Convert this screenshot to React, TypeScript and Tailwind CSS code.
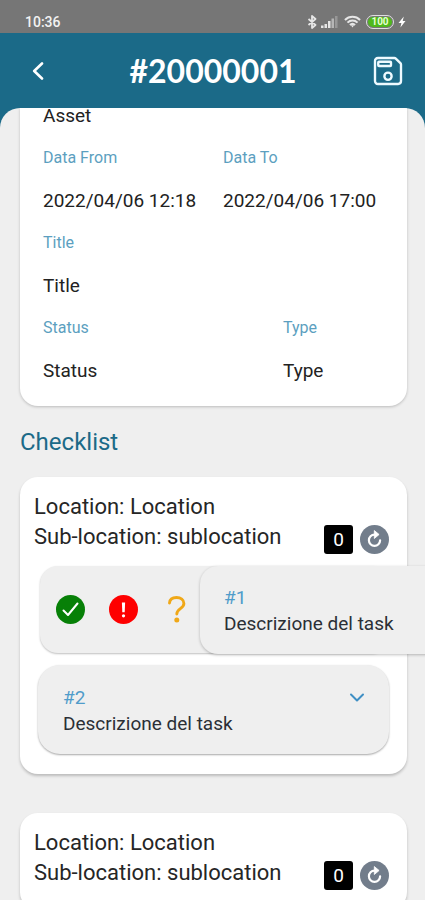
import type { ReactNode } from "react";

function BluetoothIcon() {
  return (
    <svg viewBox="0 0 10 14" className="h-[14px] w-[10px]" fill="none" stroke="#e6e6e6" strokeWidth="1.800" strokeLinejoin="round">
      <path d="M1.500 4 8.500 10 5 13V1l3.500 3-7 6" />
    </svg>
  );
}

function SignalIcon() {
  return (
    <svg viewBox="0 0 17 12" className="h-3 w-[17px]" fill="#e6e6e6">
      <rect x="0" y="9.500" width="2.500" height="2.500" />
      <rect x="3.500" y="8" width="2.500" height="4" />
      <rect x="7" y="5" width="2.500" height="7" />
      <rect x="10.500" y="2.500" width="2.500" height="9.500" fill="#b5b5b5" />
      <rect x="14" y="0" width="2.500" height="12" fill="#979797" />
    </svg>
  );
}

function WifiIcon() {
  return (
    <svg viewBox="0 0 18 13" className="h-[13px] w-[17px]" fill="none" stroke="#e6e6e6" strokeWidth="2.200">
      <path d="M1 4.800C5.500.3 12.500.3 17 4.800" />
      <path d="M3.700 7.700c3-3 7.600-3 10.600 0" />
      <path d="M6.300 10.300c1.600-1.500 3.800-1.500 5.400 0" />
      <path d="M7.300 10.500h3.400L9 12.800z" fill="#e6e6e6" stroke="none" />
    </svg>
  );
}

function BoltIcon() {
  return (
    <svg viewBox="0 0 8 12" className="h-3 w-2" fill="#fff">
      <path d="M5.800.5.500 7h2.900L2.400 11.500 7.500 5H4.700z" />
    </svg>
  );
}

function SaveIcon() {
  return (
    <svg viewBox="0 0 512 512" className="size-8" fill="none" stroke="#eefaff" strokeWidth="38" strokeLinejoin="round">
      <path d="M380.930 57.370A32 32 0 0 0 358.300 48H94.220A46.210 46.210 0 0 0 48 94.220v323.560A46.210 46.210 0 0 0 94.220 464h323.560A46.360 46.360 0 0 0 464 417.780V153.700a32 32 0 0 0-9.370-22.630z" />
      <circle cx="256" cy="340" r="58" />
      <rect x="100" y="108" width="204" height="68" rx="12" />
    </svg>
  );
}

function ReloadIcon() {
  return (
    <svg viewBox="0 0 29 29" className="size-[29px]">
      <circle cx="14.500" cy="14.500" r="14.500" fill="#727d8b" />
      <path d="M14.500 9.700a5.600 5.600 0 1 0 5.600 5.600" fill="none" stroke="#fff" strokeWidth="2.200" strokeLinecap="round" />
      <path d="M14.300 5.500v8l4.800-4z" fill="#fff" stroke="#fff" strokeWidth="0.800" strokeLinejoin="round" />
    </svg>
  );
}

function CheckIcon() {
  return (
    <svg viewBox="0 0 29 29" className="size-[29px]">
      <circle cx="14.500" cy="14.500" r="14.500" fill="#078007" />
      <path d="m7.500 15.500 4.500 4.500 9.500-11.500" fill="none" stroke="#fff" strokeWidth="2" strokeLinecap="round" strokeLinejoin="round" />
    </svg>
  );
}

function AlertIcon() {
  return (
    <svg viewBox="0 0 29 29" className="size-[29px]">
      <circle cx="14.500" cy="14.500" r="14.500" fill="#fe0000" />
      <path d="M12.900 7.500h3.200l-.4 9.800h-2.400z" fill="#fff" />
      <circle cx="14.500" cy="20.800" r="1.600" fill="#fff" />
    </svg>
  );
}

function QuestionIcon() {
  return (
    <svg viewBox="0 0 29 29" className="size-[29px]" fill="none">
      <path d="M7.500 8C7.800 4.500 10.600 2.500 14.500 2.500c4.300 0 7.400 2.300 7.400 6 0 5.200-7.100 5.200-7.100 10.500" stroke="#f0a818" strokeWidth="2.900" strokeLinecap="round" />
      <circle cx="14.800" cy="25" r="2.500" fill="#f0a818" />
    </svg>
  );
}

function Field({ label, value, className }: { label: string; value: string; className?: string }) {
  return (
    <div className={className}>
      <dt className="text-base leading-[42px] text-[#5c9fc0]">{label}</dt>
      <dd className="text-[19px] leading-[43px] text-[#222222]">{value}</dd>
    </div>
  );
}

function TaskText({ id }: { id: number }) {
  return (
    <div>
      <h3 className="text-[19px] leading-[26px] text-[#4f9cca]">#{id}</h3>
      <p className="text-[19px] leading-[26px] text-[#2b2f36]">Descrizione del task</p>
    </div>
  );
}

function LocationCard({ children }: { children?: ReactNode }) {
  return (
    <section className="rounded-[18px] bg-white pt-[15px] pb-5 shadow-[0_2px_3px_rgba(0,0,0,0.22)]">
      <div className="flex items-end justify-between pr-[18px] pl-[14px]">
        <div className="pb-[2px] text-[22px] leading-[30px] text-[#262626]">
          <p>Location: Location</p>
          <p>Sub-location: sublocation</p>
        </div>
        <div className="flex items-center gap-[7px]">
          <span className="flex size-[29px] items-center justify-center rounded-[3px] bg-black pt-px text-[19px] text-white">0</span>
          <button type="button" aria-label="Reload" className="rounded-full">
            <ReloadIcon />
          </button>
        </div>
      </div>
      {children}
    </section>
  );
}

export default function App() {
  return (
    <div className="flex h-screen flex-col overflow-hidden bg-[#1b6a88] font-['Roboto',sans-serif]">
      <div className="flex h-[33px] shrink-0 items-center justify-between bg-[#767676] pt-[10px] pr-[19px] pl-[25px]">
        <span className="text-[14px] leading-4 font-medium text-[#f2f2f2]">10:36</span>
        <div className="flex items-center">
          <BluetoothIcon />
          <span className="ml-1"><SignalIcon /></span>
          <span className="ml-[6px]"><WifiIcon /></span>
          <span className="ml-[5px] flex h-[14px] w-7 items-center justify-center rounded-full border border-[#e0e0e0] p-px">
            <span className="flex h-full w-full items-center justify-center rounded-full bg-[#4fb81c] text-[10px] leading-none font-bold text-[#e4ffd2]">100</span>
          </span>
          <span className="ml-1"><BoltIcon /></span>
        </div>
      </div>

      <header className="flex h-[75px] shrink-0 items-center justify-between pr-[21px] pl-[22px]">
        <button type="button" aria-label="Back" className="flex size-8 items-center justify-center">
          <svg viewBox="0 0 12 18" className="h-[18px] w-3" fill="none" stroke="#fff" strokeWidth="2.600" strokeLinecap="round" strokeLinejoin="round">
            <path d="M10 1.500 2.200 9l7.800 7.500" />
          </svg>
        </button>
        <h1 className="font-['Lato',sans-serif] text-[32px] leading-10 font-bold text-white">#20000001</h1>
        <button type="button" aria-label="Save">
          <SaveIcon />
        </button>
      </header>

      <main className="min-h-0 flex-1 overflow-hidden rounded-t-[20px] bg-[#efefef] pr-[18px] pl-5">
        <dl className="rounded-b-[18px] bg-white pr-1 pb-[14px] pl-[23px] shadow-[0_1px_3px_rgba(0,0,0,0.22)]">
          <dd className="mb-[14px] text-[19px] leading-[15px] text-[#222222]">Asset</dd>
          <div className="flex">
            <Field className="w-1/2" label="Data From" value="2022/04/06 12:18" />
            <Field className="w-1/2" label="Data To" value="2022/04/06 17:00" />
          </div>
          <Field label="Title" value="Title" />
          <div className="flex">
            <Field className="w-2/3" label="Status" value="Status" />
            <Field className="w-1/3" label="Type" value="Type" />
          </div>
        </dl>

        <h2 className="mt-5 mb-[19px] text-[24px] leading-8 text-[#1b6a88]">Checklist</h2>

        <div className="flex flex-col gap-[39px]">
          <LocationCard>
            <div className="mt-3 flex flex-col gap-3 px-[18px]">
              <div className="relative">
                <div className="ml-[2px] flex h-[87px] items-center gap-6 rounded-[18px] bg-[#efefef] pl-4 shadow-[0_1px_2px_rgba(0,0,0,0.25)]">
                  <button type="button" aria-label="Mark as done"><CheckIcon /></button>
                  <button type="button" aria-label="Report a problem"><AlertIcon /></button>
                  <button type="button" aria-label="Not sure"><QuestionIcon /></button>
                </div>
                <div className="absolute top-0 left-[162px] flex h-[88px] w-full items-center rounded-[18px] bg-[#efefef] pt-[2px] pl-6 shadow-[0_1px_3px_rgba(0,0,0,0.25)]">
                  <TaskText id={1} />
                </div>
              </div>
              <div className="flex h-[89px] items-center justify-between rounded-[22px] bg-[#efefef] pt-[2px] pr-6 pl-[25px] shadow-[0_1px_2px_rgba(0,0,0,0.35)]">
                <TaskText id={2} />
                <button type="button" aria-label="Expand task" className="self-start pt-[26px]">
                  <svg viewBox="0 0 16 10" className="h-[10px] w-4" fill="none" stroke="#3f8fc4" strokeWidth="2" strokeLinecap="round" strokeLinejoin="round">
                    <path d="m2 1.500 6 6 6-6" />
                  </svg>
                </button>
              </div>
            </div>
          </LocationCard>
          <LocationCard />
        </div>
      </main>
    </div>
  );
}
